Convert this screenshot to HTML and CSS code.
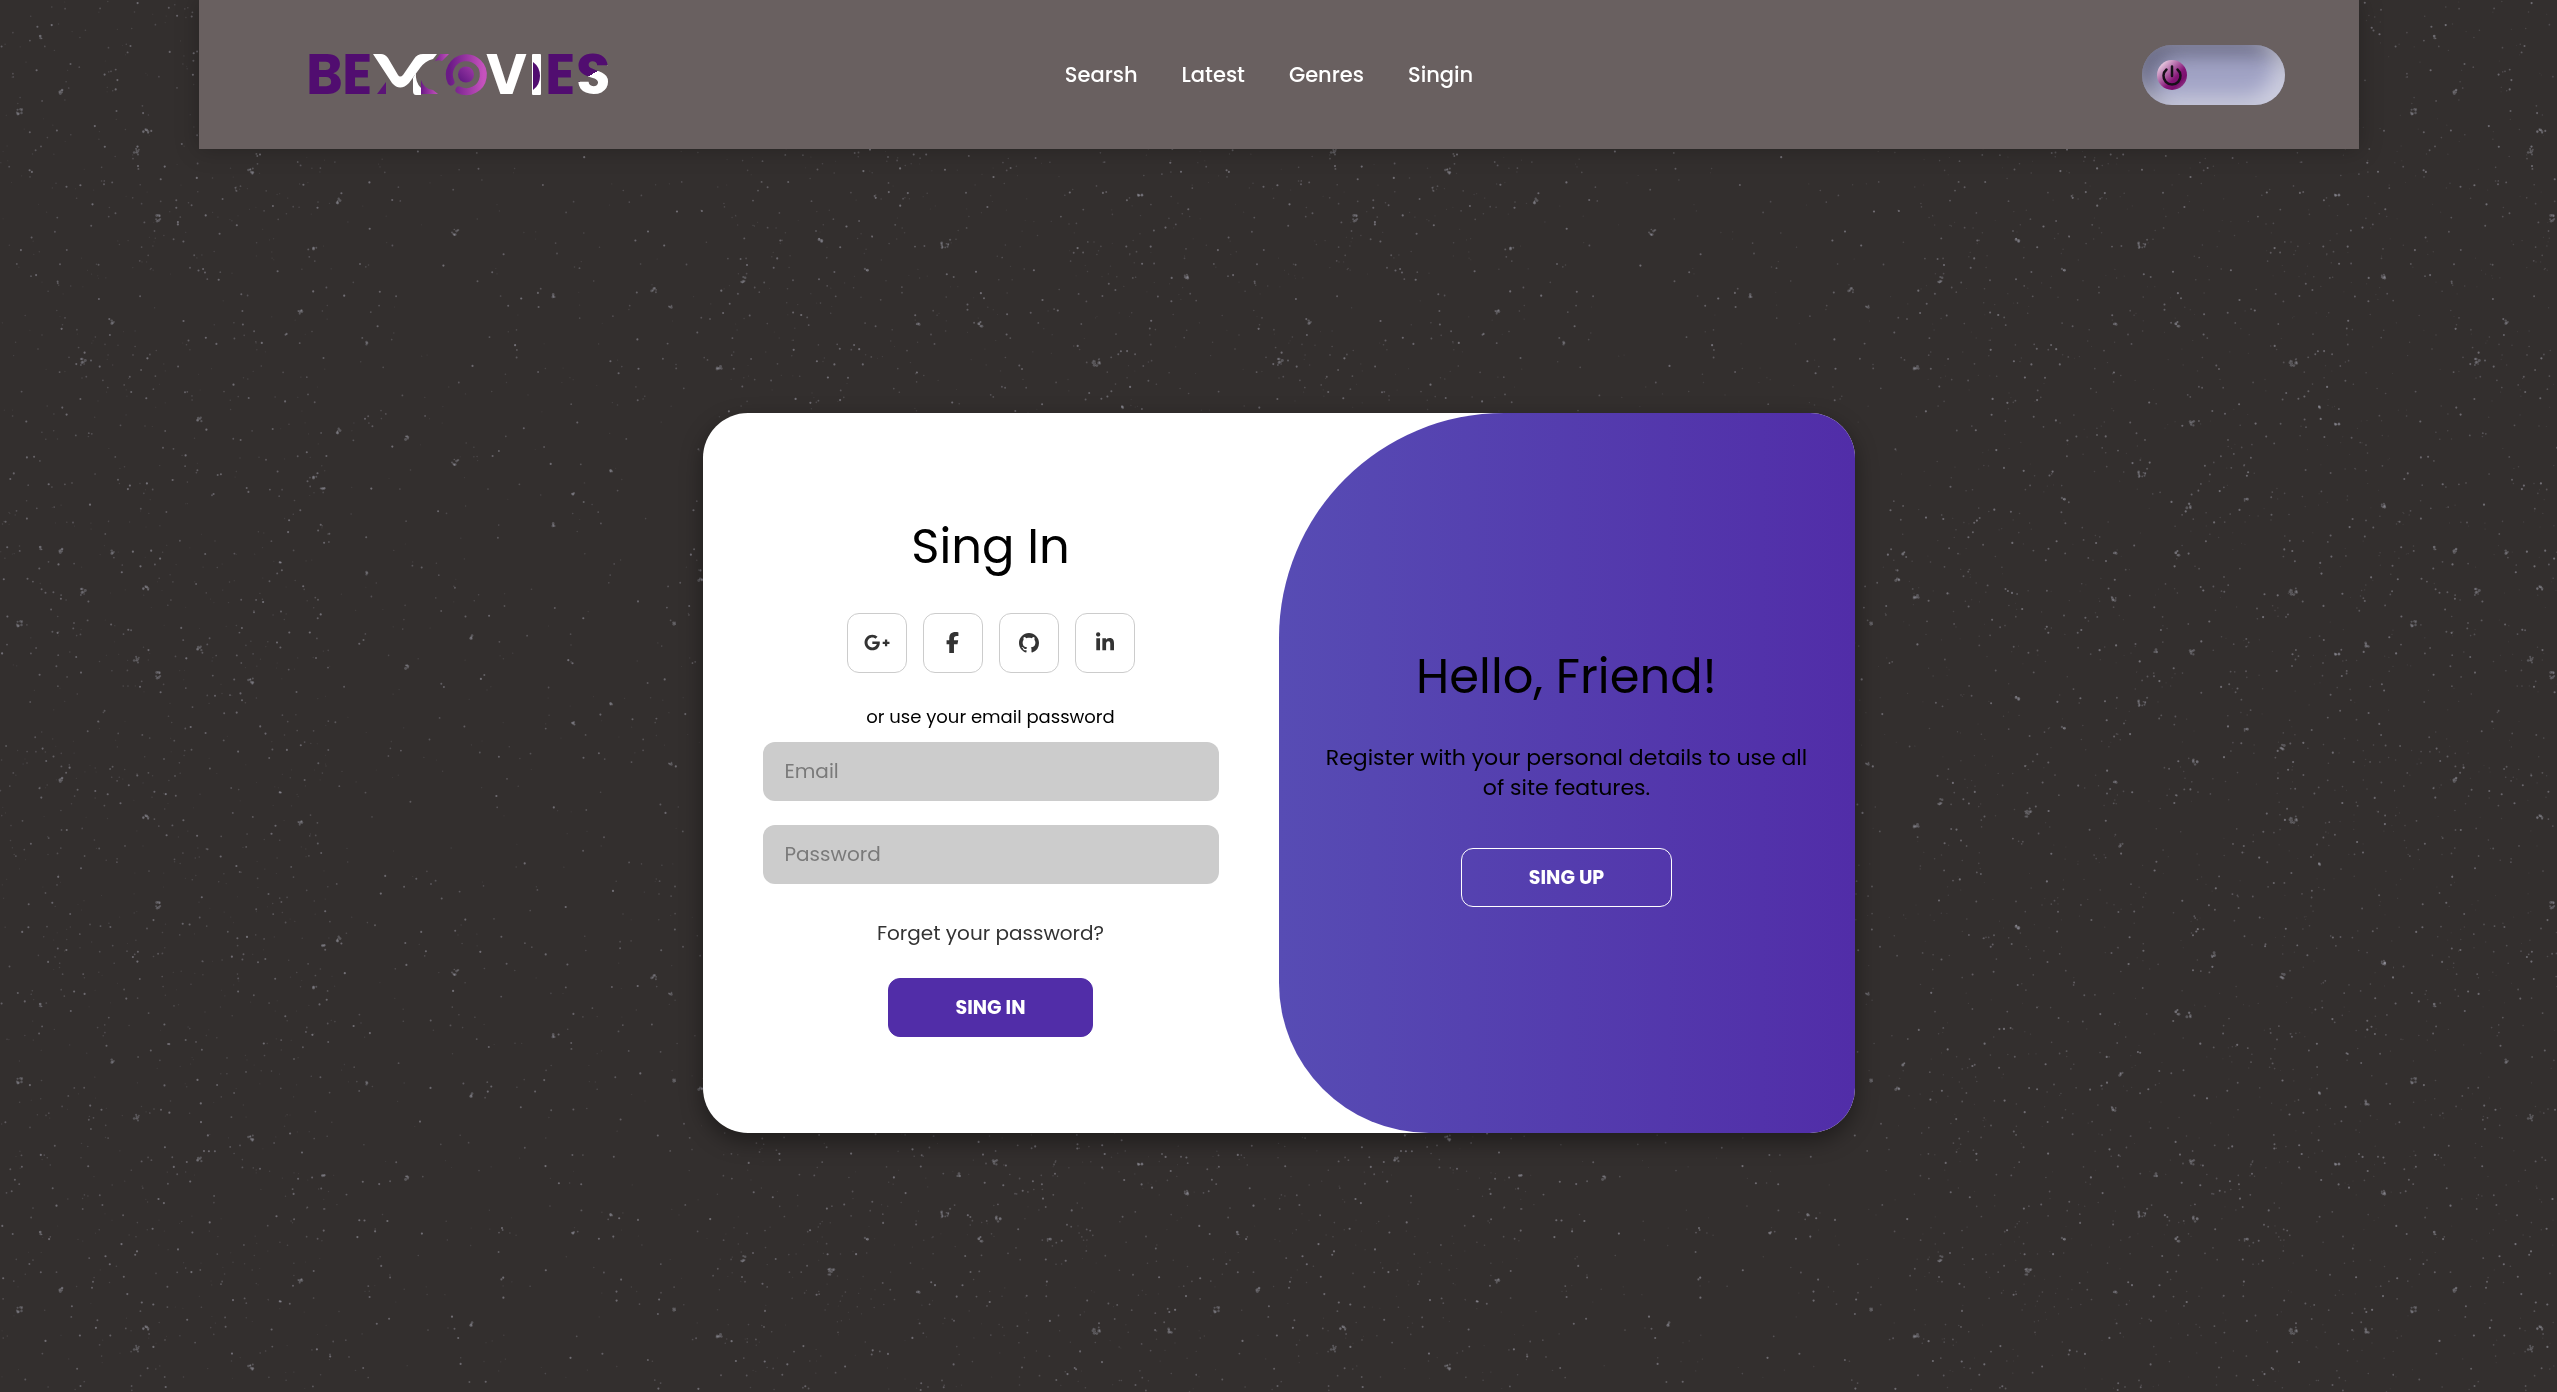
FILE: index.html
```html
<!DOCTYPE html>
<html lang="en">
<head>
<meta charset="utf-8">
<meta name="viewport" content="width=device-width, initial-scale=1">
<title>BeMovies</title>
<link rel="stylesheet" href="styles.css">
</head>
<body>
<svg class="dust" aria-hidden="true">
  <defs><pattern id="dust-tile" width="1197" height="1392" patternUnits="userSpaceOnUse"></pattern></defs>
  <rect width="100%" height="100%" fill="url(#dust-tile)"/>
</svg>

<header class="header">
  <a class="logo" href="#" aria-label="BeMovies">
    <svg class="logo-art" viewBox="10 0 320 86" width="320" height="86">
      <defs>
        <linearGradient id="ring" x1="0" y1="0" x2="1" y2="0">
          <stop offset="0" stop-color="#6a1a86"/><stop offset="1" stop-color="#c552bd"/>
        </linearGradient>
        <linearGradient id="core" x1="0" y1="1" x2="1" y2="0">
          <stop offset="0" stop-color="#5b1580"/><stop offset="1" stop-color="#a03aa8"/>
        </linearGradient>
        <linearGradient id="split" gradientUnits="userSpaceOnUse" x1="300" y1="40" x2="303" y2="45">
          <stop offset="0.5" stop-color="#510d70"/><stop offset="0.5" stop-color="#fff"/>
        </linearGradient>
      </defs>
      <text class="logo-letter" x="16" y="62">B</text>
      <text class="logo-letter" x="52" y="62">E</text>
      <path fill="#5b1477" d="M87 62 96 50V62Z"/>
      <path fill="#fff" d="M83 22H91Q95 22 98 26L108 43Q110 46 113 43L124 27Q127 22 133 22H147L143 27Q135 29 130 36L119 51Q110 60 102 51Z"/>
      <path fill="#fff" d="M126 41Q125 50 131 56V63H126Q123 63 123 59V46Z"/>
      <path fill="url(#ring)" d="M145 29 150 22H159L152 29Q148 27 143 30Z"/>
      <path fill="url(#ring)" d="M131 48Q134 57 143 58L148 62H131Z"/>
      <path fill="none" stroke="url(#ring)" stroke-width="7" stroke-linecap="round" d="M161 50A17 17 0 1 1 169 58"/>
      <circle cx="176" cy="42.500" r="8" fill="url(#core)"/>
      <text class="logo-letter logo-letter-light" x="196" y="62">V</text>
      <rect x="242" y="22" width="9" height="41" rx="1" fill="#fff"/>
      <path fill="#510d70" d="M243 30Q250 35 250 44T243 58Z"/>
      <text class="logo-letter" x="255" y="62">E</text>
      <text class="logo-letter logo-letter-split" x="286" y="62">S</text>
    </svg>
  </a>
  <nav class="nav">
    <a href="#">Searsh</a>
    <a href="#">Latest</a>
    <a href="#">Genres</a>
    <a href="#">Singin</a>
  </nav>
  <label class="toggle">
    <input class="toggle-input" type="checkbox" aria-label="Switch theme">
    <span class="toggle-knob">
      <svg viewBox="0 0 30 30" width="30" height="30" fill="none" stroke="#171019" stroke-width="2.500" stroke-linecap="round">
        <path d="M15 6.500V16M9.500 9.500A8.500 8.500 0 1 0 20.500 9.500"/>
      </svg>
    </span>
  </label>
</header>

<main class="main">
  <section class="card">
    <form class="panel sign-in">
      <h1 class="title">Sing In</h1>
      <div class="social">
        <a href="#" aria-label="Google Plus"><svg viewBox="0 0 640 512" width="26" height="21"><path d="M386.061 228.496c1.834 9.692 3.143 19.384 3.143 31.956C389.204 370.205 315.599 448 204.800 448c-106.084 0-192-85.915-192-192s85.916-192 192-192c51.864 0 95.083 18.859 128.611 50.292l-52.126 50.030c-14.145-13.621-39.028-29.599-76.485-29.599-65.484 0-118.920 54.221-118.920 121.277 0 67.056 53.436 121.277 118.920 121.277 75.961 0 104.513-54.745 108.965-82.773H204.800v-66.009h181.261zm185.406 6.437V179.200h-56.001v55.733h-55.733v56.001h55.733v55.733h56.001v-55.733H627.200v-56.001h-55.733z"/></svg></a>
        <a href="#" aria-label="Facebook"><svg viewBox="0 0 320 512" width="13" height="21"><path d="M80 299.300V512H196V299.300h86.500l18-97.800H196V166.900c0-51.700 20.300-71.500 72.700-71.500c16.300 0 29.400 .4 37 1.200V7.900C291.400 4 256.400 0 236.200 0C129.300 0 80 50.500 80 159.400v42.100H14v97.800H80z"/></svg></a>
        <a href="#" aria-label="GitHub"><svg viewBox="0 0 16 16" width="20" height="20"><path d="M8 0C3.580 0 0 3.580 0 8c0 3.540 2.290 6.530 5.470 7.590.4.070.55-.17.55-.38 0-.19-.01-.82-.01-1.490-2.010.37-2.530-.49-2.690-.94-.09-.23-.48-.94-.82-1.130-.28-.15-.68-.52-.01-.53.63-.01 1.080.58 1.230.82.72 1.210 1.870.87 2.330.66.07-.52.28-.87.51-1.070-1.780-.2-3.640-.89-3.640-3.950 0-.87.31-1.590.82-2.150-.08-.2-.36-1.020.08-2.120 0 0 .67-.21 2.200.82.64-.18 1.320-.27 2-.27.68 0 1.360.09 2 .27 1.530-1.040 2.200-.82 2.200-.82.44 1.100.16 1.920.08 2.120.51.56.82 1.270.82 2.150 0 3.070-1.870 3.750-3.650 3.950.29.25.54.73.54 1.480 0 1.070-.01 1.930-.01 2.200 0 .21.15.46.55.38A8.013 8.013 0 0016 8c0-4.420-3.580-8-8-8z"/></svg></a>
        <a href="#" aria-label="LinkedIn"><svg viewBox="0 0 448 512" width="18" height="21"><path d="M100.280 448H7.400V148.900h92.880zM53.790 108.100C24.090 108.100 0 83.500 0 53.800a53.790 53.790 0 0 1 107.580 0c0 29.700-24.100 54.300-53.790 54.300zM447.900 448h-92.680V302.400c0-34.700-.7-79.200-48.290-79.200-48.290 0-55.690 37.700-55.690 76.700V448h-92.780V148.900h89.080v40.800h1.300c12.400-23.500 42.690-48.300 87.880-48.300 94 0 111.280 61.900 111.280 142.300V448z"/></svg></a>
      </div>
      <p class="hint">or use your email password</p>
      <input class="field" type="email" placeholder="Email" aria-label="Email">
      <input class="field" type="password" placeholder="Password" aria-label="Password">
      <a class="forgot" href="#">Forget your password?</a>
      <button class="button" type="button">SING IN</button>
    </form>
    <div class="panel welcome">
      <h2 class="title">Hello, Friend!</h2>
      <p class="lead">Register with your personal details to use all of site features.</p>
      <button class="button button-outline" type="button">SING UP</button>
    </div>
  </section>
</main>
<script src="dust.js"></script>
</body>
</html>
```
FILE: styles.css
```css
* {
  box-sizing: border-box;
  margin: 0;
  padding: 0;
}

body {
  min-height: 100vh;
  display: flex;
  flex-direction: column;
  align-items: center;
  background: #332f2e;
  color: #000;
  font-family: Poppins, Inter, "Liberation Sans", sans-serif;
}

a {
  color: inherit;
  text-decoration: none;
}

.dust {
  position: fixed;
  inset: 0;
  z-index: -1;
  width: 100%;
  height: 100%;
}

/* Header */
.header {
  width: calc(100% - 40px);
  max-width: 2160px;
  min-height: 149px;
  padding: 0 74px 0 55px;
  display: grid;
  grid-template-columns: 1fr auto 1fr;
  align-items: center;
  background: #696060;
  box-shadow: 0 0 22px rgba(0, 0, 0, 0.25);
}

.logo {
  padding-left: 46px;
}

.logo-art {
  display: block;
}

.logo-letter {
  font-family: Poppins, Lato, sans-serif;
  font-size: 56px;
  font-weight: 700;
  fill: #510d70;
}

.logo-letter-light {
  fill: #fff;
}

.logo-letter-split {
  fill: url(#split);
}

.nav {
  display: flex;
  gap: 44px;
  color: #fff;
  font-size: 21px;
  font-weight: 500;
  line-height: 30px;
}

.toggle {
  justify-self: end;
  width: 143px;
  height: 60px;
  padding: 15px;
  border-radius: 30px;
  background: #a2a4c6;
  box-shadow: inset -10px -8px 20px rgba(255, 255, 255, 0.5), inset 10px 10px 20px rgba(45, 45, 65, 0.5);
  cursor: pointer;
}

.toggle-input {
  position: absolute;
  opacity: 0;
}

.toggle-knob {
  display: block;
  width: 30px;
  height: 30px;
  border-radius: 50%;
  background: linear-gradient(135deg, #efd8e8 10%, #851577 60%, #7a0f6d 75%, #a5599c);
}

.toggle-input:checked + .toggle-knob {
  margin-left: auto;
}

/* Card */
.main {
  flex: 1;
  width: 100%;
  padding: 45px 20px 40px;
  display: flex;
  align-items: center;
  justify-content: center;
}

.card {
  width: 1152px;
  max-width: 100%;
  min-height: 720px;
  display: grid;
  grid-template-columns: 1fr 1fr;
  overflow: hidden;
  border-radius: 45px;
  background: #fff;
  box-shadow: 0 8px 22px rgba(0, 0, 0, 0.4);
}

.panel {
  display: flex;
  flex-direction: column;
  align-items: center;
  justify-content: center;
  text-align: center;
}

.sign-in {
  padding: 0 60px;
}

.welcome {
  padding: 0 45px;
  border-radius: 225px 0 0 150px;
  background: linear-gradient(to right, #574cb4, #512da8);
}

.title {
  font-size: 48px;
  font-weight: 400;
  line-height: 74px;
}

.social {
  display: flex;
  gap: 16px;
  margin: 29px 0;
}

.social a {
  width: 60px;
  height: 60px;
  display: grid;
  place-items: center;
  border: 1px solid #ccc;
  border-radius: 12px;
  fill: #333;
}

.hint {
  margin-bottom: 10px;
  font-size: 18px;
  line-height: 30px;
}

.field {
  width: 100%;
  height: 59px;
  margin-bottom: 24px;
  padding: 0 22px;
  border: 0;
  border-radius: 12px;
  background: #ccc;
  font-family: inherit;
  font-size: 20px;
}

.field::placeholder {
  color: #7a7a7a;
}

.forgot {
  margin: 10px 0 30px;
  color: #333;
  font-size: 20px;
  line-height: 30px;
}

.button {
  height: 59px;
  padding: 0 67px;
  border: 1px solid #512da8;
  border-radius: 12px;
  background: #512da8;
  color: #fff;
  font-family: inherit;
  font-size: 19px;
  font-weight: 700;
  cursor: pointer;
}

.button-outline {
  border-color: #fff;
  background: transparent;
}

.lead {
  margin: 29px 0 45px;
  font-size: 22px;
  line-height: 30px;
}

@media (max-width: 900px) {
  .card {
    grid-template-columns: 1fr;
  }

  .panel {
    padding: 60px 30px;
  }

  .header {
    grid-template-columns: 1fr;
    gap: 20px;
    padding: 20px;
    justify-items: center;
  }
}
```
FILE: dust.js
```js
// Fills the background tile with fine dust and a few larger chips.
const TILE_WIDTH = 1197;
const TILE_HEIGHT = 1392;

// Each row: x, chip radius, then the heights at which the chip occurs.
const CHIPS = [
  [251, 4, 171, 681, 1138, 1367], [158, 4, 218, 675, 905], [455, 4, 232, 462, 972],
  [338, 3, 201, 431, 939], [315, 2, 248, 477, 987], [300, 3, 312, 823, 1281],
  [368, 2, 343, 573, 1083], [554, 2, 296, 525, 1036], [407, 3, 437, 666, 1177],
  [573, 2, 494, 723, 1233], [146, 4, 130, 587, 816, 1327], [137, 4, 152, 660, 1118, 1349],
  [20, 4, 111, 623, 1080, 1309], [113, 2, 322, 552, 1061], [323, 2, 488, 945, 1175],
  [199, 3, 420, 649, 1160], [60, 3, 91, 550, 779, 1289], [84, 4, 362, 592],
  [654, 3, 290, 977], [281, 2, 561, 791, 1300], [472, 2, 637, 1095, 1324],
  [41, 2, 37, 548, 1005, 1233], [612, 2, 471, 704, 1215], [670, 2, 307, 764, 994],
  [674, 2, 623, 1080, 1309], [946, 6, 244, 473, 702, 1213], [992, 3, 506, 1015],
  [981, 3, 324, 553, 1012, 1239], [1097, 5, 134, 363, 592, 820, 1331],
  [1185, 4, 276, 505, 962, 1192], [1140, 3, 196, 425, 655, 1165], [1085, 3, 747, 976],
  [1122, 2, 407, 864, 1093], [821, 3, 240, 698, 927], [831, 4, 814, 1272],
  [742, 4, 280, 802, 1259], [719, 3, 368, 597, 826, 1336], [866, 2, 270, 499, 728, 1239],
  [1170, 3, 645, 1103, 1331], [1016, 3, 955], [918, 2, 323, 552, 781, 1291],
  [917, 3, 599, 1109], [924, 2, 845, 1074], [1049, 2, 500, 730, 1240],
  [706, 2, 553, 1064], [701, 3, 579, 1088], [998, 3, 762, 1219],
  [959, 2, 651, 1175], [995, 3, 423, 652, 1162]
];

let seed = 20117;
function random() {
  seed = (seed * 16807) % 2147483647;
  return seed / 2147483647;
}

function dot(x, y, radius, opacity) {
  return `<circle cx="${x.toFixed(1)}" cy="${y.toFixed(1)}" r="${radius.toFixed(2)}" fill="#a3a1ad" opacity="${opacity.toFixed(2)}"/>`;
}

const dots = [];
for (let i = 0; i < 6500; i += 1) {
  const x = random() * TILE_WIDTH;
  const y = random() * TILE_HEIGHT;
  const sparse = x > 330 && x < 720;
  if (sparse && random() < 0.6) continue;
  const strength = random();
  dots.push(dot(x, y, 0.5 + strength * 0.6, 0.12 + strength * strength * 0.45));
}
for (const [x, size, ...heights] of CHIPS) {
  const spread = size * 1.6;
  const grains = Array.from({ length: size * 2 }, () => [
    (random() - 0.5) * spread, (random() - 0.5) * spread, 0.8 + random() * 0.7
  ]);
  for (const y of heights) {
    for (const [dx, dy, radius] of grains) dots.push(dot(x + dx, y + dy, radius, 0.34));
  }
}
document.getElementById('dust-tile').innerHTML = dots.join('');
```
